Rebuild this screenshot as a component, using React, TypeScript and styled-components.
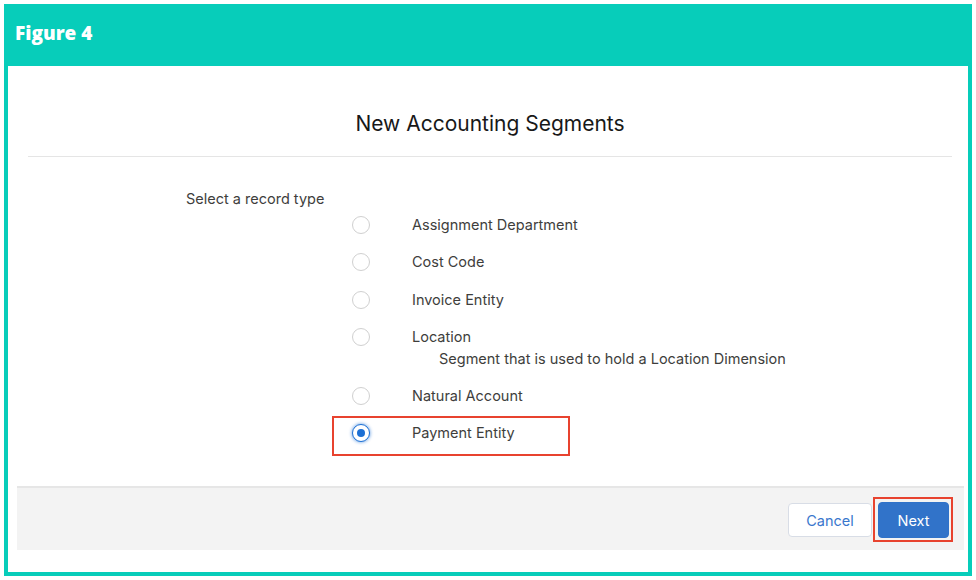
import { FC } from 'react';
import styled, { createGlobalStyle, css } from 'styled-components';

const GlobalStyle = createGlobalStyle`
    html, body {
        margin: 0;
        padding: 0;
        background: #ffffff;
    }
    body {
        font-family: Inter, "Liberation Sans", Arial, sans-serif;
        color: #3e3e3c;
    }
`

const Frame = styled.div`
    margin: 4px;
    width: 968px;
    height: 572px;
    box-sizing: border-box;
    background: #07cdba;
    padding: 0 4px 4px 4px;
    display: flex;
    flex-direction: column;
`

const Header = styled.div`
    height: 62px;
    display: flex;
    align-items: center;
    padding: 0 0 5px 7px;
    box-sizing: border-box;
    color: #ffffff;
    font-family: "Open Sans", sans-serif;
    font-weight: 800;
    font-size: 19px;
`

const Sheet = styled.div`
    flex: 1;
    background: #ffffff;
    display: flex;
    flex-direction: column;
`

const Title = styled.h2`
    margin: 0 16px 0 20px;
    padding: 44px 0 18px;
    border-bottom: 1px solid #e5e5e5;
    text-align: center;
    font-weight: 400;
    font-size: 21px;
    line-height: 28px;
    color: #181818;
`

const Body = styled.div`
    padding: 32px 0 0 178px;
    font-size: 14.5px;
    line-height: 20px;
`

const Prompt = styled.div`
    margin-bottom: -3px;
`

const Options = styled.div`
    margin-left: 166px;
    display: flex;
    flex-direction: column;
`

const Option = styled.label<{ $marked?: boolean }>`
    position: relative;
    display: grid;
    grid-template-columns: 18px auto;
    column-gap: 42px;
    align-items: center;
    height: 37.5px;
    cursor: pointer;

    ${p => p.$marked && css`
        &::after {
            content: '';
            position: absolute;
            left: -20px;
            top: 1px;
            width: 238px;
            height: 40px;
            box-sizing: border-box;
            border: 2px solid #e8432f;
        }
    `}
`

const Radio = styled.span<{ $checked?: boolean }>`
    width: 18px;
    height: 18px;
    box-sizing: border-box;
    border-radius: 50%;
    border: 1px solid #d0d0d0;
    background: #ffffff;
    display: flex;
    align-items: center;
    justify-content: center;

    ${p => p.$checked && css`
        border-color: #1b6fd4;
        box-shadow: 0 0 3px 1px rgba(27, 111, 212, 0.45);
        &::before {
            content: '';
            width: 8px;
            height: 8px;
            border-radius: 50%;
            background: #1b6fd4;
        }
    `}
`

const Description = styled.div`
    margin: -7px 0 8px 87px;
`

const Footer = styled.div`
    margin: auto 4px 22px 9px;
    height: 64px;
    box-sizing: border-box;
    background: #f3f3f3;
    border-top: 2px solid #e6e6e6;
    display: flex;
    align-items: center;
    justify-content: flex-end;
    gap: 6px;
    padding: 2px 15px 0 0;
`

const Button = styled.button<{ $brand?: boolean; $marked?: boolean }>`
    position: relative;
    height: ${p => p.$brand ? '36px' : '34px'};
    border-radius: 4px;
    font-family: Inter, "Liberation Sans", Arial, sans-serif;
    font-size: 14.5px;
    cursor: pointer;
    border: 1px solid ${p => p.$brand ? '#2f72c9' : '#d8dde6'};
    background: ${p => p.$brand ? '#3173c9' : '#ffffff'};
    color: ${p => p.$brand ? '#ffffff' : '#3a77cd'};
    padding: 0;
    width: ${p => p.$brand ? '71px' : '84px'};

    ${p => p.$marked && css`
        &::after {
            content: '';
            position: absolute;
            left: -6px;
            top: -6px;
            right: -5px;
            bottom: -5px;
            border: 2px solid #e8432f;
        }
    `}
`

interface IRecordType {
    name: string,
    description?: string,
}

const recordTypes: IRecordType[] = [
    { name: 'Assignment Department' },
    { name: 'Cost Code' },
    { name: 'Invoice Entity' },
    { name: 'Location', description: 'Segment that is used to hold a Location Dimension' },
    { name: 'Natural Account' },
    { name: 'Payment Entity' },
]

const selected = 'Payment Entity'

const App: FC = () => {
    return (
        <>
            <GlobalStyle />
            <Frame>
                <Header>Figure 4</Header>
                <Sheet>
                    <Title>New Accounting Segments</Title>
                    <Body>
                        <Prompt>Select a record type</Prompt>
                        <Options>
                            {recordTypes.map((type) => {
                                const checked = type.name === selected
                                return (
                                    <div key={type.name}>
                                        <Option $marked={checked}>
                                            <Radio $checked={checked} />
                                            <span>{type.name}</span>
                                        </Option>
                                        {type.description && <Description>{type.description}</Description>}
                                    </div>
                                )
                            })}
                        </Options>
                    </Body>
                    <Footer>
                        <Button>Cancel</Button>
                        <Button $brand $marked>Next</Button>
                    </Footer>
                </Sheet>
            </Frame>
        </>
    )
};

export default App;
